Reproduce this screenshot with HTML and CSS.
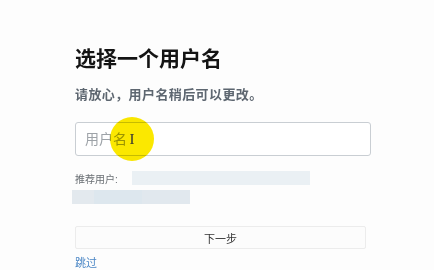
FILE: index.html
```html
<!DOCTYPE html>
<html lang="zh-CN">
<head>
    <meta charset="UTF-8">
    <meta name="viewport" content="width=device-width, initial-scale=1.0">
    <title>选择一个用户名</title>
    <link rel="stylesheet" href="styles.css">
</head>
<body>
    <div class="page">
        <h1 class="title">选择一个用户名</h1>
        <p class="subtitle">请放心，用户名稍后可以更改。</p>

        <div class="field">
            <input class="username" type="text" placeholder="用户名">
            <span class="pointer"><span class="ibeam">I</span></span>
        </div>

        <div class="suggest">
            <span class="suggest-label">推荐用户:</span>
            <span class="blur blur-long"></span>
        </div>
        <div class="suggest-row">
            <span class="blur blur-a"></span>
            <span class="blur blur-b"></span>
            <span class="blur blur-c"></span>
        </div>

        <button class="next" type="button">下一步</button>
        <a class="skip" href="#">跳过</a>
    </div>
</body>
</html>
```

FILE: styles.css
```css
body {
    margin: 0;
    background: #fdfdfd;
    font-family: "Liberation Sans", "Noto Sans CJK SC", sans-serif;
}

.page {
    width: 296px;
    padding: 44px 0 0 75px;
    display: flex;
    flex-direction: column;
}

.title {
    margin: 0;
    font-size: 21px;
    line-height: 30px;
    font-weight: 700;
    color: #141414;
}

.subtitle {
    margin: 12px 0 0;
    font-size: 13px;
    line-height: 18px;
    font-weight: 700;
    letter-spacing: 0.4px;
    color: #5d6670;
}

.field {
    position: relative;
    margin-top: 18px;
}

.username {
    box-sizing: border-box;
    width: 296px;
    height: 34px;
    padding: 0 9px;
    border: 1px solid #c9ced3;
    border-radius: 3px;
    background: #fff;
    font-family: inherit;
    font-size: 14px;
    outline: none;
}

.username::placeholder {
    color: #9ea3a8;
}

.pointer {
    position: absolute;
    left: 35px;
    top: -5px;
    width: 44px;
    height: 44px;
    border-radius: 50%;
    background: #fbe800;
    mix-blend-mode: multiply;
    display: flex;
    align-items: center;
    justify-content: center;
}

.ibeam {
    font-family: "Liberation Serif", serif;
    font-size: 15px;
    color: #333;
}

.suggest {
    margin-top: 14px;
    display: flex;
    align-items: center;
    gap: 14px;
    height: 16px;
}

.suggest-label {
    font-size: 10px;
    color: #6a6f74;
}

.blur {
    display: inline-block;
    height: 14px;
    background: #eaf0f4;
}

.blur-long {
    width: 178px;
}

.suggest-row {
    margin: 4px 0 0 -3px;
    display: flex;
    height: 14px;
}

.blur-a {
    width: 22px;
    background: #e3e9ee;
}

.blur-b {
    width: 48px;
    background: #dde7ee;
}

.blur-c {
    width: 48px;
    background: #e1e8ee;
}

.next {
    margin-top: 22px;
    width: 291px;
    height: 23px;
    border: 1px solid #ececec;
    border-radius: 2px;
    background: #fcfcfc;
    font-family: inherit;
    font-size: 11px;
    color: #333;
    padding: 0;
}

.skip {
    margin-top: 5px;
    font-size: 11px;
    color: #4a86c5;
    text-decoration: none;
    align-self: flex-start;
}
```
